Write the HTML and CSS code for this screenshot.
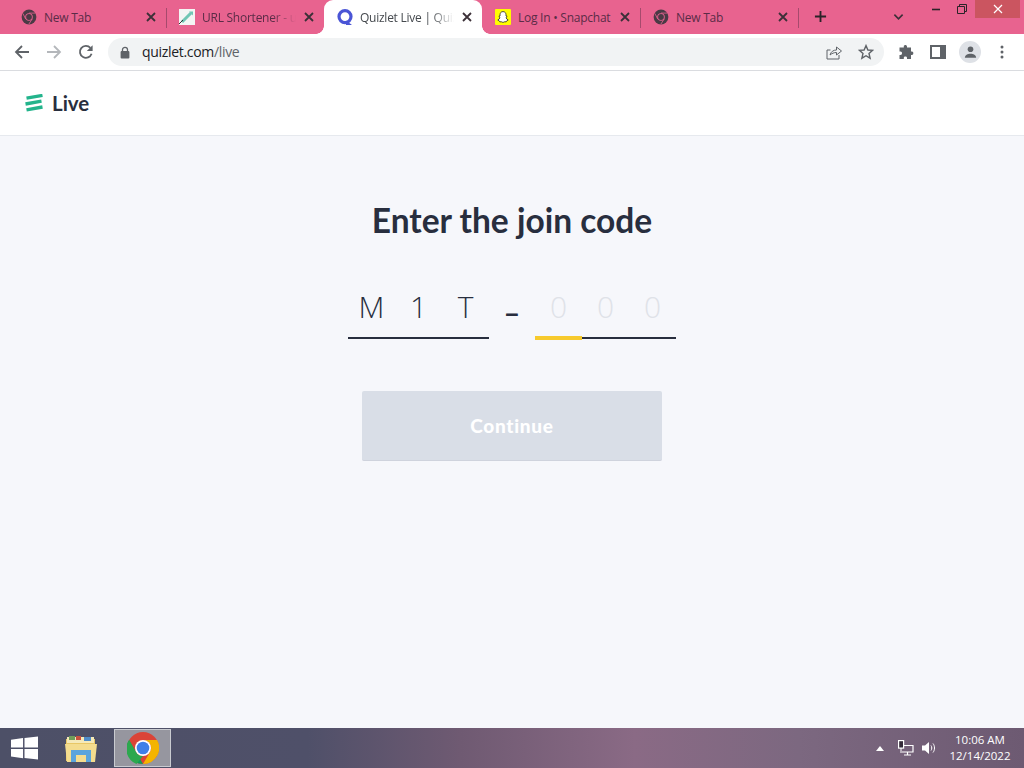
FILE: index.html
```html
<!DOCTYPE html>
<html lang="en">
<head>
<meta charset="utf-8">
<title>Quizlet Live</title>
<link rel="stylesheet" href="styles.css">
</head>
<body>
<svg class="defs" width="0" height="0" aria-hidden="true">
  <symbol id="mono-chrome" viewBox="0 0 16 16">
    <circle cx="8" cy="8" r="7.400" fill="#4a3a45"/>
    <circle cx="8" cy="8" r="3.800" fill="#e86291"/>
    <circle cx="8" cy="8" r="2.900" fill="#4a3a45"/>
    <path d="M8 4.100H14.300M4.700 10L1.900 4.500M11.200 10L7.800 15.200" stroke="#e86291" stroke-width=".8" fill="none"/>
  </symbol>
  <symbol id="close-x" viewBox="0 0 10 10">
    <path d="M1 1L9 9M9 1L1 9" stroke="#3c3038" stroke-width="1.800" fill="none"/>
  </symbol>
</svg>

<div class="tabstrip">
  <div class="tab sep">
    <svg class="favicon"><use href="#mono-chrome"/></svg>
    <span class="tab-title">New Tab</span>
    <svg class="tab-close"><use href="#close-x"/></svg>
  </div>
  <div class="tab">
    <svg class="favicon" viewBox="0 0 16 16">
      <rect width="16" height="16" fill="#f3f5f4"/>
      <path d="M3 13L12 4" stroke="#6fc6b4" stroke-width="3"/>
      <path d="M10 2.500H14V6.500Z" fill="#6fc6b4"/>
      <path d="M0 15L4 11" stroke="#333" stroke-width="1"/>
    </svg>
    <span class="tab-title fade">URL Shortener - u</span>
    <svg class="tab-close"><use href="#close-x"/></svg>
  </div>
  <div class="tab active">
    <svg class="favicon" viewBox="0 0 16 16">
      <circle cx="8" cy="7.600" r="6" fill="none" stroke="#4a55d6" stroke-width="3.200"/>
      <path d="M9 11.500L15 16H9Z" fill="#4a55d6"/>
    </svg>
    <span class="tab-title fade">Quizlet Live | Quizlet</span>
    <svg class="tab-close"><use href="#close-x"/></svg>
  </div>
  <div class="tab sep">
    <svg class="favicon" viewBox="0 0 16 16">
      <rect width="16" height="16" rx="1" fill="#fffc00"/>
      <path d="M8 2.600C5.900 2.600 5 4.200 5 5.800V7L3.800 7.500L5 8.600C4.600 9.800 3.800 10.600 2.800 11L4.300 11.900L4.800 12.800L6.500 12.800C7.300 13.500 8.700 13.500 9.500 12.800L11.200 12.800L11.700 11.900L13.200 11C12.200 10.600 11.400 9.800 11 8.600L12.200 7.500L11 7V5.800C11 4.200 10.100 2.600 8 2.600Z" fill="#fff" stroke="#222" stroke-width=".8"/>
    </svg>
    <span class="tab-title">Log In • Snapchat</span>
    <svg class="tab-close"><use href="#close-x"/></svg>
  </div>
  <div class="tab sep">
    <svg class="favicon"><use href="#mono-chrome"/></svg>
    <span class="tab-title">New Tab</span>
    <svg class="tab-close"><use href="#close-x"/></svg>
  </div>
  <svg class="new-tab" viewBox="0 0 14 14"><path d="M7 1V13M1 7H13" stroke="#2b2328" stroke-width="2" fill="none"/></svg>
  <div class="strip-right">
    <svg class="tab-list" viewBox="0 0 12 8"><path d="M1.500 1.500L6 6L10.500 1.500" stroke="#3c3038" stroke-width="1.800" fill="none"/></svg>
    <div class="win-buttons">
      <div class="win-btn"><svg class="win-glyph" viewBox="0 0 10 10"><path d="M1 5.500H9" stroke="#2b2328" stroke-width="1.600"/></svg></div>
      <div class="win-btn"><svg class="win-glyph" viewBox="0 0 10 10"><path d="M.5 2.500H7.500V9.500H.5ZM2.500 2.500V.5H9.500V7.500H7.500" stroke="#2b2328" stroke-width="1" fill="none"/></svg></div>
      <div class="win-btn win-close"><svg class="win-glyph" viewBox="0 0 10 10"><path d="M1 1L9 9M9 1L1 9" stroke="#fff" stroke-width="1.200" fill="none"/></svg></div>
    </div>
  </div>
</div>

<div class="toolbar">
  <svg class="tool-icon" viewBox="0 0 16 16"><path d="M15 8H2M8 2L2 8L8 14" stroke="#5f6368" stroke-width="1.800" fill="none"/></svg>
  <svg class="tool-icon" viewBox="0 0 16 16"><path d="M1 8H14M8 2L14 8L8 14" stroke="#b4b7bb" stroke-width="1.800" fill="none"/></svg>
  <svg class="tool-icon" viewBox="0 0 16 16"><path d="M13.600 9.800A6 6 0 1 1 12.400 3.800" stroke="#5f6368" stroke-width="1.800" fill="none"/><path d="M14.600 1.200V7H8.800Z" fill="#5f6368"/></svg>
  <div class="omnibox">
    <svg class="lock" viewBox="0 0 10 13"><path d="M2.500 5.500V3.600C2.500 .6 7.500 .6 7.500 3.600V5.500" stroke="#5f6368" stroke-width="1.300" fill="none"/><rect x=".6" y="5" width="8.800" height="7.400" rx="1" fill="#5f6368"/></svg>
    <span class="url">quizlet.com<span class="url-path">/live</span></span>
    <svg class="omni-icon" viewBox="0 0 16 16"><path d="M4.500 6H1V15H13V11" stroke="#5f6368" stroke-width="1" fill="none"/><path d="M4 11C5 7.500 7.500 6 10.500 6V3L15.500 7L10.500 11V8.500C8 8.500 6 9.300 4 11Z" stroke="#5f6368" stroke-width="1" fill="none"/></svg>
    <svg class="omni-icon" viewBox="0 0 16 16"><path d="M8 1.600L9.900 6L14.600 6.400L11 9.500L12.100 14.200L8 11.700L3.900 14.200L5 9.500L1.400 6.400L6.100 6Z" stroke="#5f6368" stroke-width="1.400" fill="none"/></svg>
  </div>
  <div class="tool-right">
    <svg class="ext-icon" viewBox="0 0 16 16"><path d="M6 1.500C7 .5 9 .8 9 2.500V3.500H13V7.500H14C15.800 7.500 15.800 11 14 11H13V15H9V13.800C9 12 5.800 12 5.800 13.800V15H1.500V11H2.500C4.500 11 4.500 7.500 2.500 7.500H1.500V3.500H5.800V2.500C5.800 2.200 5.800 1.800 6 1.500Z" fill="#5f6368"/></svg>
    <svg class="ext-icon" viewBox="0 0 16 16"><path d="M1 2H15V14H1Z" fill="none" stroke="#5f6368" stroke-width="2"/><rect x="10" y="2" width="5" height="12" fill="#5f6368"/></svg>
    <div class="avatar"><svg class="avatar-glyph" viewBox="0 0 16 16"><circle cx="8" cy="4.500" r="3" fill="#5f6368"/><path d="M2 13.500C2 10.800 5 9.300 8 9.300S14 10.800 14 13.500Z" fill="#5f6368"/></svg></div>
    <svg class="menu-dots" viewBox="0 0 4 14"><circle cx="2" cy="2" r="1.500" fill="#5f6368"/><circle cx="2" cy="7" r="1.500" fill="#5f6368"/><circle cx="2" cy="12" r="1.500" fill="#5f6368"/></svg>
  </div>
</div>

<header class="site-header">
  <svg class="live-logo" viewBox="0 0 20 18">
    <path d="M2.500 4.200L18.500 1.400M1.500 10L17.500 7.200M2.500 15.800L18.500 13" stroke="#23b48c" stroke-width="3.300" fill="none"/>
  </svg>
  <span class="live-word">Live</span>
</header>

<main class="page">
  <h1 class="heading">Enter the join code</h1>
  <div class="code-row">
    <div class="code-group">
      <span class="cell">M</span><span class="cell">1</span><span class="cell">T</span>
    </div>
    <span class="code-dash">–</span>
    <div class="code-group">
      <span class="cell empty current">0</span><span class="cell empty">0</span><span class="cell empty">0</span>
    </div>
  </div>
  <button class="continue" type="button">Continue</button>
</main>

<footer class="taskbar">
  <svg class="start" viewBox="0 0 28 24"><path d="M0 3.500L12.500 1.700V11.500H0ZM14 1.500L28 0V11.500H14ZM0 13H12.500V22.500L0 20.700ZM14 13H28V24L14 22.300Z" fill="#fff"/></svg>
  <div class="task-item">
    <svg class="folder" viewBox="0 0 32 30">
      <path d="M1 6H30V28H1Z" fill="#e8c766"/>
      <path d="M2 4H29V10H2Z" fill="#f5e9b8"/>
      <path d="M4 3H10V7H4Z" fill="#6f9d5a"/>
      <path d="M11 3H16V7H11Z" fill="#c8513e"/>
      <path d="M19 4H26V8H19Z" fill="#4f8cc9"/>
      <path d="M0 11H32L30 29H2Z" fill="#f4dc8e"/>
      <path d="M6 29V17H26V29H21V22H11V29Z" fill="#5aa4dc"/>
    </svg>
  </div>
  <div class="task-item task-active">
    <svg class="chrome" viewBox="0 0 32 32">
      <circle cx="16" cy="16" r="16" fill="#db4437"/>
      <path d="M16 32A16 16 0 0 1 2.100 8L9 20L16 32Z" fill="#0f9d58"/>
      <path d="M2.100 8L9 20A8 8 0 0 0 16 24L9.500 32A16 16 0 0 1 2.100 8Z" fill="#2da84e"/>
      <path d="M16 8H30A16 16 0 0 1 16 32L23 20A8 8 0 0 0 16 8Z" fill="#f4b400"/>
      <circle cx="16" cy="16" r="8" fill="#fff"/>
      <circle cx="16" cy="16" r="6.300" fill="#3f7fe8"/>
    </svg>
  </div>
  <div class="tray">
    <svg class="tray-up" viewBox="0 0 8 5"><path d="M0 5L4 0L8 5Z" fill="#fff"/></svg>
    <svg class="tray-net" viewBox="0 0 16 16"><path d="M4 5.500H15V12H4M9.500 12V15M6 15H13" stroke="#fff" stroke-width="1.200" fill="none"/><rect x=".6" y=".6" width="5" height="7.500" fill="#332a38" stroke="#fff" stroke-width="1.200"/><path d="M3 8V13" stroke="#fff"/></svg>
    <svg class="tray-vol" viewBox="0 0 16 16"><path d="M1 5.500H4L8 2V14L4 10.500H1Z" fill="#fff"/><path d="M10 5.500C11 6.800 11 9.200 10 10.500M12 3.500C14 6 14 10 12 12.500" stroke="#fff" stroke-width="1" fill="none"/></svg>
    <div class="clock"><span>10:06 AM</span><span>12/14/2022</span></div>
  </div>
</footer>
</body>
</html>
```
FILE: styles.css
```css
* { box-sizing: border-box; }
html, body { margin: 0; height: 100%; }
body {
  width: 1024px;
  height: 768px;
  overflow: hidden;
  display: flex;
  flex-direction: column;
  font-family: "Open Sans", "Liberation Sans", sans-serif;
  background: #f6f7fb;
}
.defs { position: absolute; }

/* tab strip */
.tabstrip {
  height: 34px;
  flex: none;
  display: flex;
  align-items: stretch;
  padding-left: 8px;
  background: #e8638f;
}
.tab {
  position: relative;
  flex: none;
  width: 158px;
  display: flex;
  align-items: center;
  padding: 0 8px 0 13px;
  font-size: 12px;
  color: #5a2c47;
}
.sep::after {
  content: "";
  position: absolute;
  right: -1px;
  top: 8px;
  height: 20px;
  width: 1px;
  background: #a64a6d;
}
.tab.active {
  background: #fff;
  color: #45494e;
  border-radius: 9px 9px 0 0;
}
.tab.active::before,
.tab.active::after {
  content: "";
  position: absolute;
  bottom: 0;
  width: 8px;
  height: 8px;
}
.tab.active::before {
  left: -8px;
  background: radial-gradient(circle at 0 0, #e8638f 7.500px, #fff 8px);
}
.tab.active::after {
  right: -8px;
  background: radial-gradient(circle at 100% 0, #e8638f 7.500px, #fff 8px);
}
.favicon { width: 16px; height: 16px; flex: none; }
.tab-title {
  flex: 1;
  margin-left: 7px;
  margin-right: 8px;
  white-space: nowrap;
  overflow: hidden;
  letter-spacing: -.25px;
}
.fade {
  -webkit-mask-image: linear-gradient(to right, #000 75%, transparent 100%);
  mask-image: linear-gradient(to right, #000 75%, transparent 100%);
}
.tab-close { width: 10px; height: 10px; flex: none; margin-right: 2px; }
.new-tab { width: 13px; height: 13px; flex: none; margin: 10px 0 0 16px; }
.strip-right {
  flex: 1;
  display: flex;
  justify-content: flex-end;
  padding-right: 4px;
}
.tab-list { width: 11px; height: 8px; margin: 13px 19px 0 0; }
.win-buttons { display: flex; height: 18px; }
.win-btn {
  width: 26px;
  height: 18px;
  display: flex;
  align-items: center;
  justify-content: center;
}
.win-close { width: 45px; background: #cb5560; }
.win-glyph { width: 10px; height: 10px; }

/* toolbar */
.toolbar {
  height: 37px;
  flex: none;
  display: flex;
  align-items: center;
  padding: 0 0 0 6px;
  background: #fff;
  border-bottom: 1px solid #dadce0;
}
.tool-icon {
  width: 16px;
  height: 16px;
  flex: none;
  margin: 0 8px 0 8px;
}
.omnibox {
  width: 776px;
  height: 28px;
  margin-left: 6px;
  display: flex;
  align-items: center;
  padding: 0 10px 0 12px;
  border-radius: 14px;
  background: #f1f3f4;
}
.lock { width: 10px; height: 13px; flex: none; }
.url {
  flex: 1;
  margin-left: 12px;
  font-size: 14px;
  line-height: 18px;
  padding-bottom: 1px;
  color: #202124;
  letter-spacing: -.32px;
}
.url-path { color: #5f6368; }
.omni-icon { width: 16px; height: 16px; flex: none; margin-left: 16px; }
.tool-right {
  flex: 1;
  display: flex;
  align-items: center;
  padding-left: 14px;
}
.ext-icon { width: 16px; height: 16px; flex: none; margin-right: 16px; }
.avatar {
  width: 22px;
  height: 22px;
  flex: none;
  margin-left: -3px;
  border-radius: 50%;
  background: #dee1e6;
  display: flex;
  align-items: center;
  justify-content: center;
}
.avatar-glyph { width: 15px; height: 15px; }
.menu-dots { width: 4px; height: 14px; flex: none; margin-left: 19px; }

/* page header */
.site-header {
  height: 65px;
  flex: none;
  display: flex;
  align-items: center;
  padding: 0 0 0 24px;
  background: #fff;
  border-bottom: 1px solid #e6e9ee;
}
.live-logo { width: 20px; height: 18px; flex: none; }
.live-word {
  margin-left: 8px;
  font-family: Lato, "Liberation Sans", sans-serif;
  font-size: 20.500px;
  font-weight: 700;
  color: #282e3e;
}

/* main */
.page {
  flex: 1;
  display: flex;
  flex-direction: column;
  align-items: center;
  background: #f6f7fb;
  font-family: Lato, "Liberation Sans", sans-serif;
}
.heading {
  margin: 63px 0 0;
  height: 42px;
  line-height: 42px;
  font-size: 33.500px;
  font-weight: 700;
  color: #282e3e;
}
.code-row {
  margin-top: 39px;
  display: flex;
  align-items: flex-start;
}
.code-group {
  display: flex;
  border-bottom: 2px solid #282e3e;
}
.cell {
  position: relative;
  width: 47px;
  height: 57px;
  line-height: 54px;
  text-align: center;
  font-family: "Open Sans", Lato, sans-serif;
  font-size: 30px;
  font-weight: 300;
  color: #282e3e;
}
.cell.empty { color: #dfe2e8; }
.cell.current::after {
  content: "";
  position: absolute;
  left: 0;
  right: 0;
  bottom: -3px;
  height: 4px;
  background: #f7ca2d;
}
.code-dash {
  width: 46px;
  text-align: center;
  line-height: 54px;
  font-size: 29px;
  font-weight: 700;
  color: #282e3e;
  padding-top: 5px;
}
.continue {
  width: 300px;
  height: 70px;
  margin-top: 52px;
  border: 0;
  border-bottom: 1px solid #cfd3dd;
  border-radius: 2px;
  background: #d9dee7;
  color: #fff;
  font-family: Lato, "Liberation Sans", sans-serif;
  font-size: 19px;
  font-weight: 900;
  letter-spacing: .7px;
}

/* taskbar */
.taskbar {
  height: 40px;
  flex: none;
  display: flex;
  align-items: center;
  padding-left: 11px;
  background: linear-gradient(90deg, #4d5067 0%, #4f5069 30%, #6f5a72 45%, #8a6a85 62%, #7c6880 78%, #6d5a72 100%);
  color: #fff;
}
.start { width: 27px; height: 24px; flex: none; }
.task-item {
  width: 57px;
  height: 38px;
  flex: none;
  display: flex;
  align-items: center;
  justify-content: center;
  margin-left: 14px;
}
.task-active {
  margin-left: 5px;
  background: #96969f;
  border: 1px solid #c9cbd0;
}
.folder { width: 32px; height: 30px; }
.chrome { width: 32px; height: 32px; }
.tray {
  flex: 1;
  display: flex;
  align-items: center;
  justify-content: flex-end;
}
.tray-up { width: 8px; height: 5px; flex: none; }
.tray-net { width: 16px; height: 16px; flex: none; margin-left: 14px; }
.tray-vol { width: 16px; height: 16px; flex: none; margin-left: 7px; }
.clock {
  width: 88px;
  margin-left: -1px;
  display: flex;
  flex-direction: column;
  align-items: center;
  font-size: 11.500px;
  line-height: 16px;
}
```
